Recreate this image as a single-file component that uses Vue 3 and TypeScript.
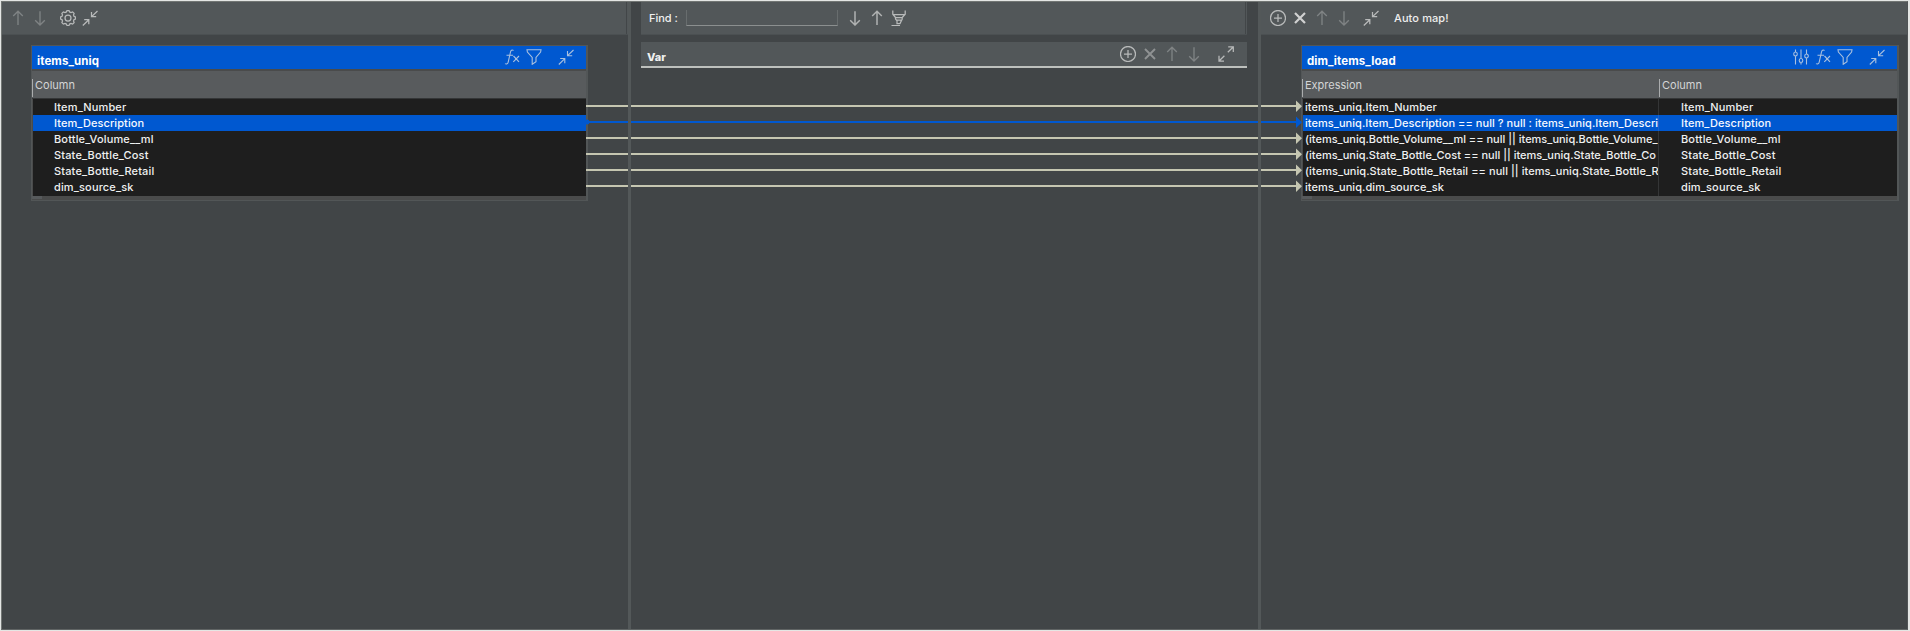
<script setup lang="ts">
import { defineComponent, h } from 'vue'

type IconName = 'up' | 'down' | 'gear' | 'collapse' | 'expand' | 'plus' | 'close' | 'marker' | 'fx' | 'filter' | 'sliders'

const paths: Record<IconName, string> = {
  up: 'M8 15V1.5M3.2 6L8 1.3L12.8 6',
  down: 'M8 1.3V14.8M3.2 10.3L8 15L12.8 10.3',
  gear: 'M6.4 1.9L7 .5H9L9.6 1.9L11 2.5L12.6 1.9L14.1 3.4L13.5 5L14.1 6.4L15.5 7V9L14.1 9.6L13.5 11L14.1 12.6L12.6 14.1L11 13.5L9.6 14.1L9 15.5H7L6.4 14.1L5 13.5L3.4 14.1L1.9 12.6L2.5 11L1.9 9.6L.5 9V7L1.9 6.4L2.5 5L1.9 3.4L3.4 1.9L5 2.5ZM11 8A3 3 0 1 1 5 8A3 3 0 1 1 11 8',
  collapse: 'M.8 15.5L6.8 9.7M2.2 9.5H6.8V14.2M15.5 1L9.6 6.6M9.5 2V6.7H14.2',
  expand: 'M1.3 14.8L6.4 9.7M1 9.8V15H6M9.8 6.3L15.2 1M10.2 .8H15.3V6',
  plus: 'M15.5 8A7.5 7.5 0 1 1 .5 8A7.5 7.5 0 1 1 15.5 8M8 4V12M4 8H12',
  close: 'M3 3L13 13M13 3L3 13',
  marker: 'M1.8 .5V4.2L4.5 7.5V9L6 10.8V13.5H9L11.2 9V7.5L14.2 4.2V.5M2 4.5H14M4.5 7.5H11.5M6 10H10M.5 15.5H9',
  fx: 'M9.5 1.5C8 .4 6.9 1.2 6.5 3L4.2 13.2C3.8 14.8 2.5 15.5 1 14.6M2.5 6.2H9M9.5 7L15 12.8M15 7L9.3 12.8',
  filter: 'M1 .8H15L14.6 3L10 8.5V12.7L6.2 15.3V8.5L1.4 3Z',
  sliders: 'M2.5 .5V3M2.5 7V15.5M4.3 5A1.8 2 0 1 1 .7 5A1.8 2 0 1 1 4.3 5M8 .5V9.5M8 13.5V15.5M9.8 11.5A1.8 2 0 1 1 6.2 11.5A1.8 2 0 1 1 9.8 11.5M13.5 .5V5M13.5 9V15.5M15.3 7A1.8 2 0 1 1 11.7 7A1.8 2 0 1 1 15.3 7',
}

const Icon = defineComponent({
  props: { name: { type: String, required: true } },
  setup: (props) => () =>
    h('svg', { viewBox: '0 0 16 16', width: 16, height: 16, fill: 'none', stroke: 'currentColor' }, [
      h('path', { d: paths[props.name as IconName] }),
    ]),
})

const selected = 1
const columns: string[] = ['Item_Number', 'Item_Description', 'Bottle_Volume__ml', 'State_Bottle_Cost', 'State_Bottle_Retail', 'dim_source_sk']
const expressions: string[] = [
  'items_uniq.Item_Number',
  'items_uniq.Item_Description == null ? null : items_uniq.Item_Descri',
  '(items_uniq.Bottle_Volume__ml == null || items_uniq.Bottle_Volume_',
  '(items_uniq.State_Bottle_Cost == null || items_uniq.State_Bottle_Co',
  '(items_uniq.State_Bottle_Retail == null || items_uniq.State_Bottle_R',
  'items_uniq.dim_source_sk',
]
</script>

<template>
  <div class="editor">
    <section class="pane inputs">
      <header class="bar">
        <Icon name="up" class="ic off" /><Icon name="down" class="ic off" />
        <Icon name="gear" class="ic wide" /><Icon name="collapse" class="ic" />
        <i class="edge" />
      </header>
      <div class="table">
        <div class="title"><b>items_uniq</b>
          <Icon name="fx" class="ic" /><Icon name="filter" class="ic" /><Icon name="collapse" class="ic far" />
        </div>
        <div class="head"><span>Column</span></div>
        <div class="rows">
          <div v-for="(c, i) in columns" :key="c" class="row" :class="{ sel: i === selected }"><span class="name">{{ c }}</span></div>
        </div>
        <div class="foot"><i /></div>
      </div>
    </section>
    <div class="split" />
    <section class="pane vars">
      <header class="bar find">
        <label>Find :</label><div class="field" />
        <Icon name="down" class="ic lit" /><Icon name="up" class="ic lit" /><Icon name="marker" class="ic" />
        <i class="edge" />
      </header>
      <div class="varbar">
        <b>Var</b>
        <Icon name="plus" class="ic" /><Icon name="close" class="ic dim" /><Icon name="up" class="ic off" /><Icon name="down" class="ic off" /><Icon name="expand" class="ic far" />
      </div>
    </section>
    <div class="split" />
    <section class="pane outputs">
      <header class="bar">
        <Icon name="plus" class="ic" /><Icon name="close" class="ic bold" /><Icon name="up" class="ic off" /><Icon name="down" class="ic off" />
        <Icon name="collapse" class="ic wide" /><span class="auto">Auto map!</span>
      </header>
      <div class="table">
        <div class="title"><b>dim_items_load</b>
          <Icon name="sliders" class="ic" /><Icon name="fx" class="ic" /><Icon name="filter" class="ic" /><Icon name="collapse" class="ic far" />
        </div>
        <div class="head two"><span>Expression</span><span>Column</span></div>
        <div class="rows">
          <div v-for="(c, i) in columns" :key="c" class="row two" :class="{ sel: i === selected }">
            <span class="expr">{{ expressions[i] }}</span><span class="name">{{ c }}</span>
          </div>
        </div>
        <div class="foot"><i /></div>
      </div>
    </section>
    <svg class="links" width="716" height="96" viewBox="0 0 716 96">
      <g v-for="(c, i) in columns" :key="c" :class="{ on: i === selected }" :transform="`translate(0 ${i * 16})`">
        <rect x="0" y="6" width="713" height="2" />
        <path d="M710 1.5L716 7.2L710 13Z" />
        <circle v-if="i === selected" cx="1" cy="7" r="2.5" />
      </g>
    </svg>
  </div>
</template>

<style>
body { background: #e4e6e4; overflow: hidden; }
</style>

<style scoped>
.editor {
  position: relative; box-sizing: border-box; width: 1907px; height: 629px; margin: 1px;
  border: 1px solid #727674; border-bottom-color: #606464; border-right: 1px solid #505456;
  display: grid; grid-template-columns: 626px 3px 627px 3px 1fr;
  background: #414547; color: #eff0f0;
  font: 500 11px/16px Inter, "Liberation Sans", sans-serif; white-space: nowrap;
}
.pane { min-width: 0; }
.split { background: #535859; z-index: 3; }
.bar {
  position: relative; box-sizing: border-box; height: 33px; padding: 0 0 1px 8px;
  display: flex; align-items: center; gap: 6px; background: #525759; border-bottom: 1px solid #4b5052;
}
.edge { position: absolute; right: 1px; top: 0; width: 1px; height: 32px; background: #424648; }
.ic { flex: none; color: #b8baba; stroke-width: 1.25; }
.off { color: #7f8384; stroke-width: 1.35; }
.dim { color: #8f9293; stroke-width: 1.9; }
.lit { color: #b0b2b2; stroke-width: 1.5; }
.bold { color: #d0d1d1; stroke-width: 2.2; }
.wide { margin-left: 6px; }
.outputs .wide { margin-left: 5px; }
.auto { margin-left: 9px; color: #eee; letter-spacing: .1px; }
.table { box-sizing: border-box; width: 557px; height: 156px; margin: 10px 0 0 29px; border: 1px solid #525657; border-right-width: 2px; background: #4a4b4b; }
.title { display: flex; height: 23px; padding: 0 12px 0 5px; background: #0058d0; gap: 6px; align-items: flex-start; }
.title b { margin: 7px auto 0 0; font-size: 11.5px; font-weight: 700; color: #fff; letter-spacing: .08px; }
.title .ic { margin-top: 3px; color: #a9c0df; stroke-width: 1.1; }
.title .far, .varbar .far { margin-left: 10px; }
.head { display: grid; height: 27px; margin-top: 2px; background: #585b5d; align-items: end; border-bottom: 1px solid #343637; }
.head span { box-sizing: border-box; height: 18px; margin-bottom: 1px; padding-left: 2px; border-left: 1px solid #aaacad; line-height: 13px; color: #d4d5d5; font-weight: 400; }
.row { height: 16px; background: #1e1e1e; display: grid; line-height: 17px; }
.rows { margin-left: 1px; padding-bottom: 1px; background: #1e1e1e; }
.row.sel { background: #0058d0; color: #f6f8ff; }
.name { padding-left: 21px; letter-spacing: .15px; }
.sel .name { letter-spacing: .08px; }
.foot { height: 4px; }
.foot i { display: block; width: 10px; height: 3px; background: #575a5c; }
.vars .bar, .varbar { margin-left: 10px; width: 606px; }
.find label { margin-right: 2px; width: 29px; }
.field { box-sizing: border-box; width: 152px; height: 16px; margin-right: 3px; border: 1px solid #686d6e; border-width: 0 1px 1px; border-bottom: 1px solid #8b8f8f; }
.varbar { position: relative; box-sizing: border-box; height: 26px; margin-top: 7px; padding: 0 13px 0 6px; background: #525759; border-bottom: 2px solid #bdc0bd; display: flex; gap: 6px; }
.varbar b { margin: 7px auto 0 0; font-weight: 800; }
.varbar .ic { margin-top: 4px; }
.outputs .bar { padding-left: 9px; }
.outputs .table { width: 598px; margin-left: 40px; }
.two { grid-template-columns: 357px 1fr; }
.row.two { grid-template-columns: 356px 1fr; }
.expr { overflow: hidden; padding-left: 2px; border-right: 1px solid #343536; letter-spacing: .06px; }
.sel .expr { border-color: #1b63c9; letter-spacing: .05px; }
.row:nth-child(3) .expr, .row:nth-child(4) .expr { letter-spacing: 0; }
.outputs .name { padding-left: 22px; }
.links { position: absolute; left: 584px; top: 97px; z-index: 2; fill: #c5c6b1; }
.links .on { fill: #0058d0; }
</style>
